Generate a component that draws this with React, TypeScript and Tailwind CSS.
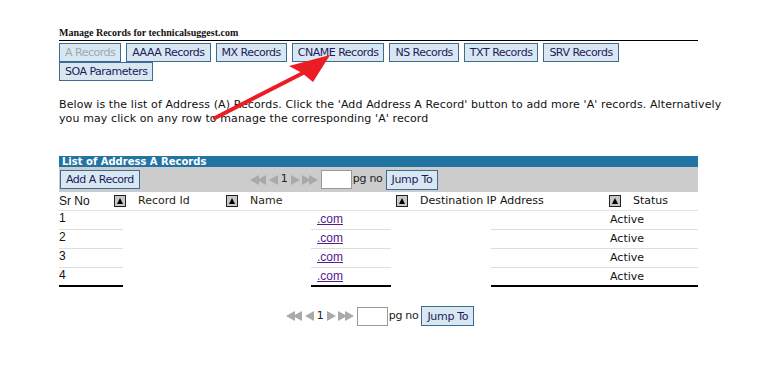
import React from 'react';

const tabs = ['AAAA Records', 'MX Records', 'CNAME Records', 'NS Records', 'TXT Records', 'SRV Records'];

function Btn({ children, disabled }: { children: React.ReactNode; disabled?: boolean }) {
  return (
    <button
      className={`h-[19px] px-[5px] bg-[#d9e7f1] border border-[#3c6c96] text-[11px] tracking-[-0.5px] leading-none ${
        disabled ? 'text-[#9aa7b1]' : 'text-[#1b1b5e]'
      }`}
    >
      {children}
    </button>
  );
}

function SortIcon() {
  return (
    <span className="inline-flex w-[12px] h-[12px] border border-[#222] bg-[#c8c8c8] items-center justify-center">
      <svg width="8" height="8" viewBox="0 0 8 8">
        <polygon points="4,1 7,7 1,7" fill="#000" />
      </svg>
    </span>
  );
}

function Pager() {
  const c = '#a9a9a9';
  return (
    <div className="flex items-center gap-[2px]">
      <svg width="17" height="10" viewBox="0 0 17 10">
        <polygon points="0,5 9,0 9,10" fill={c} />
        <polygon points="7,5 16,0 16,10" fill={c} />
      </svg>
      <svg width="9" height="10" viewBox="0 0 9 10">
        <polygon points="0,5 9,0 9,10" fill={c} />
      </svg>
      <span className="text-[11px] text-[#222] px-[1px]">1</span>
      <svg width="9" height="10" viewBox="0 0 9 10">
        <polygon points="9,5 0,0 0,10" fill={c} />
      </svg>
      <svg width="17" height="10" viewBox="0 0 17 10">
        <polygon points="9,5 0,0 0,10" fill={c} />
        <polygon points="16,5 7,0 7,10" fill={c} />
      </svg>
    </div>
  );
}

function JumpBox() {
  return (
    <div className="flex items-center">
      <Pager />
      <input className="ml-[2px] w-[31px] h-[19px] bg-white border border-[#9a9a9a] outline-none" />
      <span className="ml-[1px] text-[11px] tracking-[-0.3px] text-[#222]">pg no</span>
      <button className="ml-[3px] h-[20px] px-[5px] bg-[#d9e7f1] border border-[#3c6c96] text-[11px] tracking-[-0.3px] text-[#1b1b5e] leading-none">
        Jump To
      </button>
    </div>
  );
}

const rows = ['1', '2', '3', '4'];

export default function App() {
  return (
    <div className="relative w-[770px] h-[371px] bg-white overflow-hidden font-['DejaVu_Sans',sans-serif] text-[#111]">
      <div className="pl-[59px] pt-[27px] w-[698px]">
        <div className="font-['Liberation_Serif',serif] font-bold text-[10px] leading-[12px] border-b border-black pb-[1px] w-[639px]">
          Manage Records for technicalsuggest.com
        </div>

        <div className="mt-[2px] flex gap-[5px]">
          <Btn disabled>A Records</Btn>
          {tabs.map((t) => (
            <Btn key={t}>{t}</Btn>
          ))}
        </div>
        <div className="flex">
          <Btn>SOA Parameters</Btn>
        </div>

        <p className="mt-[17px] text-[11px] leading-[14px] w-[668px] tracking-[0.11px]">
          Below is the list of Address (A) Records. Click the 'Add Address A Record' button to add more 'A' records. Alternatively
          you may click on any row to manage the corresponding 'A' record
        </p>

        <div className="mt-[30px] w-[639px]">
          <div className="h-[11px] bg-[#2274a3] text-white font-bold text-[10px] leading-[11px] pl-[3px]">
            List of Address A Records
          </div>
          <div className="h-[25px] bg-[#cccccc] flex items-center pl-[1px]">
            <Btn>Add A Record</Btn>
            <div className="ml-[110px]">
              <JumpBox />
            </div>
          </div>

          <div className="h-[19px] flex items-center text-[11px] border-b border-[#e2e2e2]">
            <span className="w-[55px] font-['Liberation_Sans',sans-serif] text-[12px]">Sr No</span>
            <SortIcon />
            <span className="w-[100px] pl-[12px] text-[#2b2410]">Record Id</span>
            <SortIcon />
            <span className="w-[158px] pl-[12px] text-[#2b2410]">Name</span>
            <SortIcon />
            <span className="w-[201px] pl-[12px]">Destination IP Address</span>
            <SortIcon />
            <span className="pl-[12px]">Status</span>
          </div>

          {rows.map((n, i) => {
            const last = i === rows.length - 1;
            const line = last ? 'border-b-2 border-black' : 'border-b border-[#dedede]';
            return (
              <div key={n} className="h-[19px] flex font-['Liberation_Sans',sans-serif] text-[12px]">
                <div className={`w-[64px] ${line} leading-[14px]`}>{n}</div>
                <div className="w-[188px]" />
                <div className={`w-[80px] ${line} text-right pr-[48px] leading-[16px]`}>
                  <a className="text-[#551a8b] underline">.com</a>
                </div>
                <div className="w-[100px]" />
                <div className={`flex-1 ${line} pl-[119px] leading-[18px] font-['DejaVu_Sans',sans-serif] text-[11px]`}>
                  Active
                </div>
              </div>
            );
          })}
        </div>

        <div className="mt-[19px] flex justify-center w-[639px] pl-[3px]">
          <JumpBox />
        </div>
      </div>

      <svg className="absolute left-0 top-0" width="770" height="371" viewBox="0 0 770 371">
        <line x1="215" y1="118" x2="303" y2="73" stroke="#ec1c24" strokeWidth="4" strokeLinecap="round" />
        <polygon points="330,55 289,66 302,73 313,82" fill="#ec1c24" />
      </svg>
    </div>
  );
}
